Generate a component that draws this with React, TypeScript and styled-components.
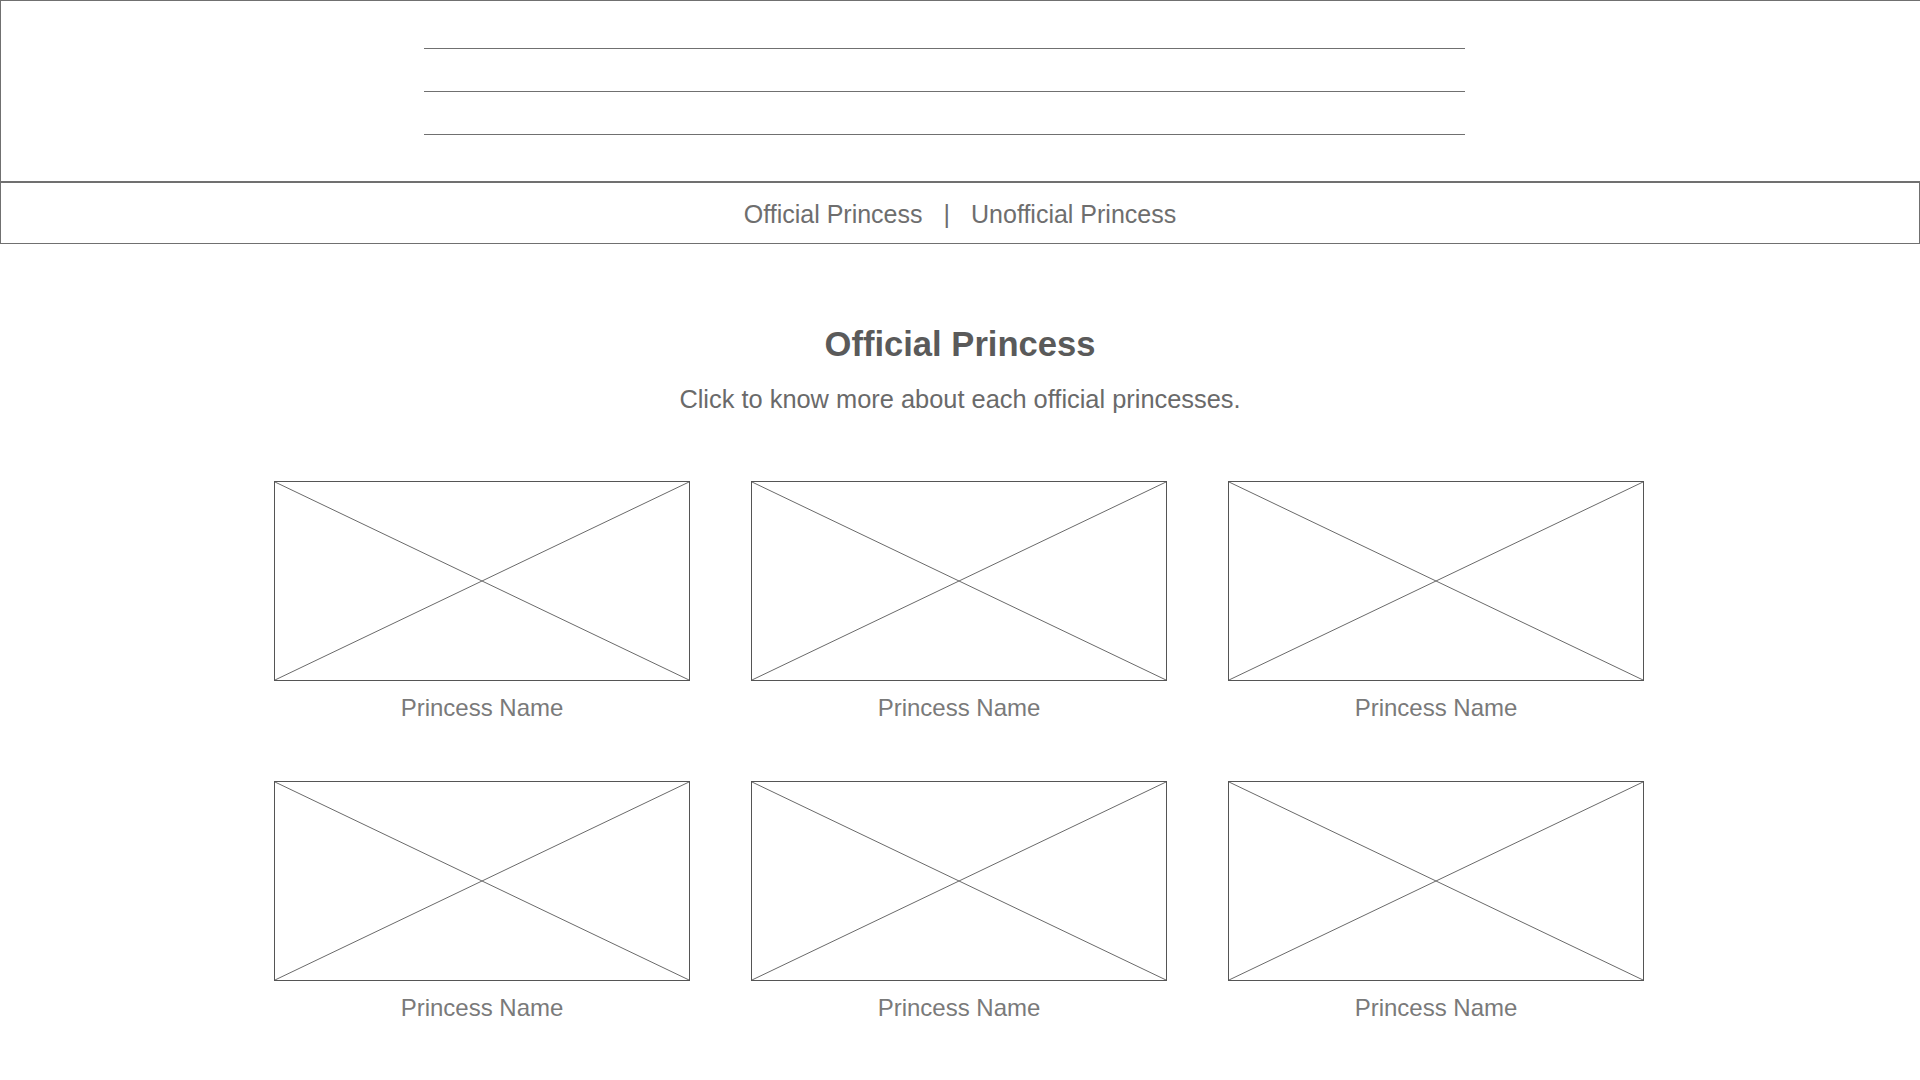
import styled, { createGlobalStyle } from 'styled-components';

const GlobalStyle = createGlobalStyle`
  body {
    margin: 0;
    background: #ffffff;
    font-family: 'Liberation Sans', Arial, Helvetica, sans-serif;
  }
`;

const princesses = Array.from({ length: 6 }, (_, i) => ({
  id: i,
  name: 'Princess Name',
}));

function Placeholder() {
  return (
    <ImageBox>
      <svg width="100%" height="100%" viewBox="0 0 100 100" preserveAspectRatio="none">
        <line x1="0" y1="0" x2="100" y2="100" stroke="#6a6a6a" strokeWidth="1" vectorEffect="non-scaling-stroke" />
        <line x1="100" y1="0" x2="0" y2="100" stroke="#6a6a6a" strokeWidth="1" vectorEffect="non-scaling-stroke" />
      </svg>
    </ImageBox>
  );
}

export default function App() {
  return (
    <>
      <GlobalStyle />
      <Header>
        <HeaderLines>
          <HeaderLine />
          <HeaderLine />
          <HeaderLine />
        </HeaderLines>
      </Header>
      <Nav>
        <NavLink>Official Princess</NavLink>
        <NavDivider>|</NavDivider>
        <NavLink>Unofficial Princess</NavLink>
      </Nav>
      <Main>
        <Title>Official Princess</Title>
        <Subtitle>Click to know more about each official princesses.</Subtitle>
        <Grid>
          {princesses.map((p) => (
            <Card key={p.id}>
              <Placeholder />
              <CardName>{p.name}</CardName>
            </Card>
          ))}
        </Grid>
      </Main>
    </>
  );
}

const Header = styled.header`
  box-sizing: border-box;
  height: 182px;
  width: 100%;
  border-top: 1px solid #707070;
  border-left: 1px solid #707070;
  border-bottom: 1px solid #707070;
  padding-top: 47px;
`;

const HeaderLines = styled.div`
  display: flex;
  flex-direction: column;
  gap: 42px;
  width: 1041px;
  margin-left: 423px;
`;

const HeaderLine = styled.div`
  height: 1px;
  background: #707070;
`;

const Nav = styled.nav`
  box-sizing: border-box;
  height: 62px;
  padding-top: 2px;
  border: 1px solid #707070;
  display: flex;
  align-items: center;
  justify-content: center;
  gap: 21px;
  font-size: 25px;
  color: #6e6e6e;
`;

const NavLink = styled.span`
  cursor: pointer;
`;

const NavDivider = styled.span`
  color: #6e6e6e;
`;

const Main = styled.main`
  display: flex;
  flex-direction: column;
  align-items: center;
  padding-top: 80px;
  padding-bottom: 60px;
`;

const Title = styled.h1`
  margin: 0;
  font-size: 34.6px;
  line-height: 40px;
  font-weight: 700;
  color: #5a5a5a;
`;

const Subtitle = styled.p`
  margin: 20px 0 0;
  font-size: 25.4px;
  line-height: 30px;
  color: #6a6a6a;
`;

const Grid = styled.div`
  display: grid;
  grid-template-columns: repeat(3, 416px);
  column-gap: 61px;
  row-gap: 59px;
  margin: 67px 2px 0 0;
`;

const Card = styled.div`
  display: flex;
  flex-direction: column;
  align-items: center;
  cursor: pointer;
`;

const ImageBox = styled.div`
  box-sizing: border-box;
  width: 416px;
  height: 200px;
  border: 1px solid #555555;
  svg {
    display: block;
  }
`;

const CardName = styled.span`
  margin-top: 13px;
  font-size: 24px;
  line-height: 28px;
  color: #7a7a7a;
`;
